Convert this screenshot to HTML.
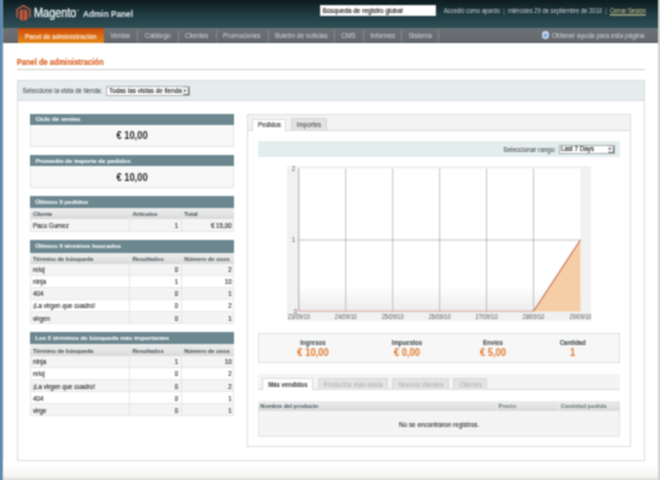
<!DOCTYPE html>
<html><head><meta charset="utf-8">
<style>
*{margin:0;padding:0;box-sizing:border-box}
html,body{width:660px;height:480px;overflow:hidden;background:#fff}
body{position:relative;font-family:"Liberation Sans",sans-serif;color:#222}
#w{position:absolute;left:0;top:0;width:660px;height:480px;background:#fff;overflow:hidden;filter:url(#bl)}
.a{position:absolute}
.t{position:absolute;white-space:nowrap;line-height:1;transform-origin:0 50%}
</style></head><body>
<svg width="0" height="0" style="position:absolute"><filter id="bl" x="0" y="0" width="100%" height="100%" color-interpolation-filters="sRGB"><feConvolveMatrix order="3" kernelMatrix="1 2 1 2 4 2 1 2 1" divisor="16" edgeMode="duplicate"/></filter></svg>
<div id="w">
<div class="a" style="left:0;top:0;width:4px;height:480px;background:linear-gradient(90deg,#5d8db8 0,#5d8db8 1px,#5480aa 1px,#5480aa 2px,#8c9cb2 2px,#8c9cb2 3px,#eaf0fa 3px)"></div>
<div class="a" style="left:658px;top:0;width:2px;height:480px;background:#d6d3d0"></div>
<div class="a" style="left:3px;top:0;width:655px;height:28px;background:linear-gradient(#0c1b1f,#1f3a41 50%,#2f4f57)"></div>
<svg class="a" style="left:0;top:0" width="40" height="26" viewBox="0 0 40 26">
 <path d="M17.1 17.4 V9.4 L23.5 5.7 L29.9 9.4 V17.4" fill="none" stroke="#c0624a" stroke-width="1.5"/>
 <polygon points="19.5,10.7 23.1,8.7 23.1,21 19.5,19.2" fill="#c4573b"/>
 <polygon points="23.9,8.7 27.5,10.7 27.5,19.2 23.9,21" fill="#c4573b"/>
</svg>
<div class="t" style="left:34.00px;top:7px;font-size:10.9px;font-weight:normal;color:#e9eef0;transform:scaleY(1.15);-webkit-text-stroke:0.3px #e9eef0">Magento<span style="font-size:3px;position:relative;top:-4.5px;margin-left:0.2px;-webkit-text-stroke:0">™</span></div>
<div class="t" style="left:83.00px;top:11px;font-size:8.26px;font-weight:bold;color:#e3e9ec;transform:scaleY(1.05);">Admin Panel</div>
<div class="a" style="left:320.3px;top:5px;width:115.3px;height:10.5px;background:#fff;border:1px solid #dfe5e7"></div>
<div class="t" style="left:322.50px;top:8px;font-size:6.45px;font-weight:normal;color:#1a1612;transform:scaleY(1.15);-webkit-text-stroke:0.15px #1a1612">Búsqueda de registro global</div>
<div class="t" style="left:443.70px;top:9px;font-size:5.82px;font-weight:normal;color:#cdd5d8;transform:scaleY(1.15);">Accedió como apardo &nbsp;<span style="color:#8fa0a5">|</span>&nbsp; miércoles 29 de septiembre de 2010 &nbsp;<span style="color:#8fa0a5">|</span>&nbsp; <span style="color:#ddd394;text-decoration:underline;text-decoration-thickness:0.5px;text-underline-offset:1px">Cerrar Sesión</span></div>
<div class="a" style="left:3px;top:28px;width:655px;height:14.5px;background:linear-gradient(#6d7276,#65696d 88%,#505458)"></div>
<div class="a" style="left:18px;top:28px;width:85.5px;height:14.5px;background:linear-gradient(#9c4a1e 0,#cf510e 10%,#d9620f 40%,#e3891c 100%)"></div>
<div class="t" style="left:25.00px;top:34px;font-size:6.22px;font-weight:bold;color:#fbe6d2;transform:scaleY(1.05);">Panel de administración</div>
<div class="t" style="left:110.30px;top:33px;font-size:6.45px;font-weight:normal;color:#d3d8db;transform:scaleY(1.05);">Ventas</div>
<div class="a" style="left:136.5px;top:28px;width:1px;height:15px;background:linear-gradient(#6e7377,#8e9397 50%,#6a6f73)"></div>
<div class="t" style="left:144.80px;top:33px;font-size:6.45px;font-weight:normal;color:#d3d8db;transform:scaleY(1.05);">Catálogo</div>
<div class="a" style="left:178px;top:28px;width:1px;height:15px;background:linear-gradient(#6e7377,#8e9397 50%,#6a6f73)"></div>
<div class="t" style="left:185.00px;top:33px;font-size:6.45px;font-weight:normal;color:#d3d8db;transform:scaleY(1.05);">Clientes</div>
<div class="a" style="left:215.5px;top:28px;width:1px;height:15px;background:linear-gradient(#6e7377,#8e9397 50%,#6a6f73)"></div>
<div class="t" style="left:223.00px;top:33px;font-size:6.45px;font-weight:normal;color:#d3d8db;transform:scaleY(1.05);">Promociones</div>
<div class="a" style="left:267.5px;top:28px;width:1px;height:15px;background:linear-gradient(#6e7377,#8e9397 50%,#6a6f73)"></div>
<div class="t" style="left:275.00px;top:33px;font-size:6.45px;font-weight:normal;color:#d3d8db;transform:scaleY(1.05);">Boletín de noticias</div>
<div class="a" style="left:333.5px;top:28px;width:1px;height:15px;background:linear-gradient(#6e7377,#8e9397 50%,#6a6f73)"></div>
<div class="t" style="left:341.30px;top:33px;font-size:6.45px;font-weight:normal;color:#d3d8db;transform:scaleY(1.05);">CMS</div>
<div class="a" style="left:362.5px;top:28px;width:1px;height:15px;background:linear-gradient(#6e7377,#8e9397 50%,#6a6f73)"></div>
<div class="t" style="left:370.30px;top:33px;font-size:6.45px;font-weight:normal;color:#d3d8db;transform:scaleY(1.05);">Informes</div>
<div class="a" style="left:400.8px;top:28px;width:1px;height:15px;background:linear-gradient(#6e7377,#8e9397 50%,#6a6f73)"></div>
<div class="t" style="left:408.70px;top:33px;font-size:6.45px;font-weight:normal;color:#d3d8db;transform:scaleY(1.05);">Sistema</div>
<div class="a" style="left:438.3px;top:28px;width:1px;height:15px;background:linear-gradient(#6e7377,#8e9397 50%,#6a6f73)"></div>
<div class="a" style="left:541.9px;top:31.2px;width:7.6px;height:7.6px;border-radius:50%;background:radial-gradient(circle at 50% 55%,#6d9acb 0,#8fb4da 30%,#d2e5f6 55%,#b4cfea 100%)"></div>
<div class="t" style="left:552.00px;top:33px;font-size:6.45px;font-weight:normal;color:#d3d8db;transform:scaleY(1.05);">Obtener ayuda para esta página</div>
<div class="t" style="left:16.70px;top:59px;font-size:7.56px;font-weight:bold;color:#d9672a;transform:scaleY(1.15);-webkit-text-stroke:0.2px #d9672a">Panel de administración</div>
<div class="a" style="left:16.5px;top:69px;width:628.5px;height:1px;background:#c9c9c9"></div>
<div class="a" style="left:16.5px;top:80px;width:628.5px;height:381px;border:1px solid #dcdcdc"></div>
<div class="a" style="left:16.5px;top:79.5px;width:628.5px;height:21px;background:#e5eced;border:1px solid #d6dcdd"></div>
<div class="t" style="left:22.50px;top:88px;font-size:6.16px;font-weight:normal;color:#333;transform:scaleY(1.15);">Seleccione la vista de tienda:</div>
<div class="a" style="left:106px;top:85.8px;width:83.6px;height:10.2px;background:#fff;border:1px solid #a9aeb0"></div>
<div class="t" style="left:109.00px;top:88px;font-size:6.36px;font-weight:normal;color:#111;transform:scaleY(1.15);-webkit-text-stroke:0.1px #111">Todas las vistas de tienda</div>
<div class="a" style="left:182.6px;top:86.8px;width:6.3px;height:8.3px;background:#f2f2f2;border-style:solid;border-width:0.6px 1px 1px 0.6px;border-color:#d8d8d8 #6f6f6f #6f6f6f #d8d8d8"></div>
<div class="a" style="left:184.2px;top:89.9px;width:0;height:0;border-left:1.7px solid transparent;border-right:1.7px solid transparent;border-top:2.2px solid #111"></div>
<div class="a" style="left:30px;top:113.8px;width:204px;height:33px;background:#f8f8f8;border:1px solid #e4e4e4"></div>
<div class="a" style="left:30px;top:113.8px;width:204px;height:11px;background:#6c8790"></div>
<div class="t" style="left:35.40px;top:116px;font-size:6.13px;font-weight:bold;color:#f2f6f7;transform:none;-webkit-text-stroke:0.1px #f2f6f7">Ciclo de ventas</div>
<div class="t" style="left:102.00px;width:60px;text-align:center;top:132px;font-size:9.35px;font-weight:bold;color:#2a2a2a;transform:scaleY(1.15);">€ 10,00</div>
<div class="a" style="left:30px;top:155.3px;width:204px;height:33px;background:#f8f8f8;border:1px solid #e4e4e4"></div>
<div class="a" style="left:30px;top:155.3px;width:204px;height:11px;background:#6c8790"></div>
<div class="t" style="left:35.40px;top:158px;font-size:6.13px;font-weight:bold;color:#f2f6f7;transform:none;-webkit-text-stroke:0.1px #f2f6f7">Promedio de importe de pedidos</div>
<div class="t" style="left:102.00px;width:60px;text-align:center;top:174px;font-size:9.35px;font-weight:bold;color:#2a2a2a;transform:scaleY(1.15);">€ 10,00</div>
<div class="a" style="left:30px;top:196.2px;width:204px;height:35.5px;background:#fff;border:1px solid #e2e2e2"></div>
<div class="a" style="left:30px;top:196.2px;width:204px;height:11.6px;background:#6c8790"></div>
<div class="t" style="left:35.20px;top:199px;font-size:6.15px;font-weight:bold;color:#f2f6f7;transform:none;-webkit-text-stroke:0.1px #f2f6f7">Últimos 5 pedidos</div>
<div class="a" style="left:30px;top:207.80px;width:204px;height:10.9px;background:linear-gradient(#ececec,#e6e6e6 45%,#d9d9d9)"></div>
<div class="t" style="left:33.00px;top:212px;font-size:5.8px;font-weight:bold;color:#535d61;transform:scaleY(1.05);-webkit-text-stroke:0.08px #535d61">Cliente</div>
<div class="t" style="left:132.40px;top:212px;font-size:5.8px;font-weight:bold;color:#535d61;transform:scaleY(1.05);-webkit-text-stroke:0.08px #535d61">Artículos</div>
<div class="t" style="left:184.30px;top:212px;font-size:5.8px;font-weight:bold;color:#535d61;transform:scaleY(1.05);-webkit-text-stroke:0.08px #535d61">Total</div>
<div class="a" style="left:30px;top:218.70px;width:204px;height:13px;background:#f4f4f4;border:1px solid #e6e6e6;border-top:0"></div>
<div class="t" style="left:33.00px;top:223px;font-size:6.2px;font-weight:normal;color:#1e1e1e;transform:scaleY(1.15);-webkit-text-stroke:0.1px #1e1e1e">Paco Gomez</div>
<div class="t" style="right:481.80px;top:223px;font-size:6.2px;font-weight:normal;color:#1e1e1e;transform:scaleY(1.15);-webkit-text-stroke:0.1px #1e1e1e">1</div>
<div class="t" style="right:428.40px;top:223px;font-size:6.2px;font-weight:normal;color:#1e1e1e;transform:scaleY(1.15);-webkit-text-stroke:0.1px #1e1e1e">€ 15,00</div>
<div class="a" style="left:129px;top:207.80px;width:1px;height:23.90px;background:#e4e4e4"></div>
<div class="a" style="left:180.8px;top:207.80px;width:1px;height:23.90px;background:#e4e4e4"></div>
<div class="a" style="left:30px;top:240.3px;width:204px;height:84.0px;background:#fff;border:1px solid #e2e2e2"></div>
<div class="a" style="left:30px;top:240.3px;width:204px;height:12.3px;background:#6c8790"></div>
<div class="t" style="left:35.20px;top:243px;font-size:6.15px;font-weight:bold;color:#f2f6f7;transform:none;-webkit-text-stroke:0.1px #f2f6f7">Últimos 5 términos buscados</div>
<div class="a" style="left:30px;top:252.60px;width:204px;height:11.4px;background:linear-gradient(#ececec,#e6e6e6 45%,#d9d9d9)"></div>
<div class="t" style="left:33.00px;top:257px;font-size:5.8px;font-weight:bold;color:#535d61;transform:scaleY(1.05);-webkit-text-stroke:0.08px #535d61">Término de búsqueda</div>
<div class="t" style="left:132.40px;top:257px;font-size:5.8px;font-weight:bold;color:#535d61;transform:scaleY(1.05);-webkit-text-stroke:0.08px #535d61">Resultados</div>
<div class="t" style="left:184.30px;top:257px;font-size:5.8px;font-weight:bold;color:#535d61;transform:scaleY(1.05);-webkit-text-stroke:0.08px #535d61">Número de usos</div>
<div class="a" style="left:30px;top:264.00px;width:204px;height:12.05px;background:#f4f4f4;border:1px solid #e6e6e6;border-top:0"></div>
<div class="t" style="left:33.00px;top:267px;font-size:6.2px;font-weight:normal;color:#1e1e1e;transform:scaleY(1.15);-webkit-text-stroke:0.1px #1e1e1e">reloj</div>
<div class="t" style="right:481.80px;top:267px;font-size:6.2px;font-weight:normal;color:#1e1e1e;transform:scaleY(1.15);-webkit-text-stroke:0.1px #1e1e1e">0</div>
<div class="t" style="right:428.40px;top:267px;font-size:6.2px;font-weight:normal;color:#1e1e1e;transform:scaleY(1.15);-webkit-text-stroke:0.1px #1e1e1e">2</div>
<div class="a" style="left:30px;top:276.05px;width:204px;height:12.05px;background:#fff;border:1px solid #e6e6e6;border-top:0"></div>
<div class="t" style="left:33.00px;top:279px;font-size:6.2px;font-weight:normal;color:#1e1e1e;transform:scaleY(1.15);-webkit-text-stroke:0.1px #1e1e1e">ninja</div>
<div class="t" style="right:481.80px;top:279px;font-size:6.2px;font-weight:normal;color:#1e1e1e;transform:scaleY(1.15);-webkit-text-stroke:0.1px #1e1e1e">1</div>
<div class="t" style="right:428.40px;top:279px;font-size:6.2px;font-weight:normal;color:#1e1e1e;transform:scaleY(1.15);-webkit-text-stroke:0.1px #1e1e1e">10</div>
<div class="a" style="left:30px;top:288.10px;width:204px;height:12.05px;background:#f4f4f4;border:1px solid #e6e6e6;border-top:0"></div>
<div class="t" style="left:33.00px;top:291px;font-size:6.2px;font-weight:normal;color:#1e1e1e;transform:scaleY(1.15);-webkit-text-stroke:0.1px #1e1e1e">404</div>
<div class="t" style="right:481.80px;top:291px;font-size:6.2px;font-weight:normal;color:#1e1e1e;transform:scaleY(1.15);-webkit-text-stroke:0.1px #1e1e1e">0</div>
<div class="t" style="right:428.40px;top:291px;font-size:6.2px;font-weight:normal;color:#1e1e1e;transform:scaleY(1.15);-webkit-text-stroke:0.1px #1e1e1e">1</div>
<div class="a" style="left:30px;top:300.15px;width:204px;height:12.05px;background:#fff;border:1px solid #e6e6e6;border-top:0"></div>
<div class="t" style="left:33.00px;top:303px;font-size:6.2px;font-weight:normal;color:#1e1e1e;transform:scaleY(1.15);-webkit-text-stroke:0.1px #1e1e1e">¡La virgen que cuadro!</div>
<div class="t" style="right:481.80px;top:303px;font-size:6.2px;font-weight:normal;color:#1e1e1e;transform:scaleY(1.15);-webkit-text-stroke:0.1px #1e1e1e">0</div>
<div class="t" style="right:428.40px;top:303px;font-size:6.2px;font-weight:normal;color:#1e1e1e;transform:scaleY(1.15);-webkit-text-stroke:0.1px #1e1e1e">2</div>
<div class="a" style="left:30px;top:312.20px;width:204px;height:12.05px;background:#f4f4f4;border:1px solid #e6e6e6;border-top:0"></div>
<div class="t" style="left:33.00px;top:316px;font-size:6.2px;font-weight:normal;color:#1e1e1e;transform:scaleY(1.15);-webkit-text-stroke:0.1px #1e1e1e">virgen</div>
<div class="t" style="right:481.80px;top:316px;font-size:6.2px;font-weight:normal;color:#1e1e1e;transform:scaleY(1.15);-webkit-text-stroke:0.1px #1e1e1e">0</div>
<div class="t" style="right:428.40px;top:316px;font-size:6.2px;font-weight:normal;color:#1e1e1e;transform:scaleY(1.15);-webkit-text-stroke:0.1px #1e1e1e">1</div>
<div class="a" style="left:129px;top:252.60px;width:1px;height:71.65px;background:#e4e4e4"></div>
<div class="a" style="left:180.8px;top:252.60px;width:1px;height:71.65px;background:#e4e4e4"></div>
<div class="a" style="left:30px;top:332.3px;width:204px;height:83.8px;background:#fff;border:1px solid #e2e2e2"></div>
<div class="a" style="left:30px;top:332.3px;width:204px;height:12.1px;background:#6c8790"></div>
<div class="t" style="left:35.20px;top:335px;font-size:6.15px;font-weight:bold;color:#f2f6f7;transform:none;-webkit-text-stroke:0.1px #f2f6f7">Los 5 términos de búsqueda más importantes</div>
<div class="a" style="left:30px;top:344.40px;width:204px;height:11.4px;background:linear-gradient(#ececec,#e6e6e6 45%,#d9d9d9)"></div>
<div class="t" style="left:33.00px;top:349px;font-size:5.8px;font-weight:bold;color:#535d61;transform:scaleY(1.05);-webkit-text-stroke:0.08px #535d61">Término de búsqueda</div>
<div class="t" style="left:132.40px;top:349px;font-size:5.8px;font-weight:bold;color:#535d61;transform:scaleY(1.05);-webkit-text-stroke:0.08px #535d61">Resultados</div>
<div class="t" style="left:184.30px;top:349px;font-size:5.8px;font-weight:bold;color:#535d61;transform:scaleY(1.05);-webkit-text-stroke:0.08px #535d61">Número de usos</div>
<div class="a" style="left:30px;top:355.80px;width:204px;height:12.05px;background:#f4f4f4;border:1px solid #e6e6e6;border-top:0"></div>
<div class="t" style="left:33.00px;top:359px;font-size:6.2px;font-weight:normal;color:#1e1e1e;transform:scaleY(1.15);-webkit-text-stroke:0.1px #1e1e1e">ninja</div>
<div class="t" style="right:481.80px;top:359px;font-size:6.2px;font-weight:normal;color:#1e1e1e;transform:scaleY(1.15);-webkit-text-stroke:0.1px #1e1e1e">1</div>
<div class="t" style="right:428.40px;top:359px;font-size:6.2px;font-weight:normal;color:#1e1e1e;transform:scaleY(1.15);-webkit-text-stroke:0.1px #1e1e1e">10</div>
<div class="a" style="left:30px;top:367.85px;width:204px;height:12.05px;background:#fff;border:1px solid #e6e6e6;border-top:0"></div>
<div class="t" style="left:33.00px;top:371px;font-size:6.2px;font-weight:normal;color:#1e1e1e;transform:scaleY(1.15);-webkit-text-stroke:0.1px #1e1e1e">reloj</div>
<div class="t" style="right:481.80px;top:371px;font-size:6.2px;font-weight:normal;color:#1e1e1e;transform:scaleY(1.15);-webkit-text-stroke:0.1px #1e1e1e">0</div>
<div class="t" style="right:428.40px;top:371px;font-size:6.2px;font-weight:normal;color:#1e1e1e;transform:scaleY(1.15);-webkit-text-stroke:0.1px #1e1e1e">2</div>
<div class="a" style="left:30px;top:379.90px;width:204px;height:12.05px;background:#f4f4f4;border:1px solid #e6e6e6;border-top:0"></div>
<div class="t" style="left:33.00px;top:384px;font-size:6.2px;font-weight:normal;color:#1e1e1e;transform:scaleY(1.15);-webkit-text-stroke:0.1px #1e1e1e">¡La virgen que cuadro!</div>
<div class="t" style="right:481.80px;top:384px;font-size:6.2px;font-weight:normal;color:#1e1e1e;transform:scaleY(1.15);-webkit-text-stroke:0.1px #1e1e1e">0</div>
<div class="t" style="right:428.40px;top:384px;font-size:6.2px;font-weight:normal;color:#1e1e1e;transform:scaleY(1.15);-webkit-text-stroke:0.1px #1e1e1e">2</div>
<div class="a" style="left:30px;top:391.95px;width:204px;height:12.05px;background:#fff;border:1px solid #e6e6e6;border-top:0"></div>
<div class="t" style="left:33.00px;top:396px;font-size:6.2px;font-weight:normal;color:#1e1e1e;transform:scaleY(1.15);-webkit-text-stroke:0.1px #1e1e1e">404</div>
<div class="t" style="right:481.80px;top:396px;font-size:6.2px;font-weight:normal;color:#1e1e1e;transform:scaleY(1.15);-webkit-text-stroke:0.1px #1e1e1e">0</div>
<div class="t" style="right:428.40px;top:396px;font-size:6.2px;font-weight:normal;color:#1e1e1e;transform:scaleY(1.15);-webkit-text-stroke:0.1px #1e1e1e">1</div>
<div class="a" style="left:30px;top:404.00px;width:204px;height:12.05px;background:#f4f4f4;border:1px solid #e6e6e6;border-top:0"></div>
<div class="t" style="left:33.00px;top:408px;font-size:6.2px;font-weight:normal;color:#1e1e1e;transform:scaleY(1.15);-webkit-text-stroke:0.1px #1e1e1e">virge</div>
<div class="t" style="right:481.80px;top:408px;font-size:6.2px;font-weight:normal;color:#1e1e1e;transform:scaleY(1.15);-webkit-text-stroke:0.1px #1e1e1e">0</div>
<div class="t" style="right:428.40px;top:408px;font-size:6.2px;font-weight:normal;color:#1e1e1e;transform:scaleY(1.15);-webkit-text-stroke:0.1px #1e1e1e">1</div>
<div class="a" style="left:129px;top:344.40px;width:1px;height:71.65px;background:#e4e4e4"></div>
<div class="a" style="left:180.8px;top:344.40px;width:1px;height:71.65px;background:#e4e4e4"></div>
<div class="a" style="left:246.8px;top:114px;width:384.5px;height:333px;border:1px solid #dcdcdc;background:#fff"></div>
<div class="a" style="left:247.8px;top:115px;width:382.5px;height:15.5px;background:#f3f3f3;border-bottom:1px solid #d9d9d9"></div>
<div class="a" style="left:252px;top:119px;width:34.2px;height:12px;background:#fff;border:1px solid #d9d9d9;border-bottom:0"></div>
<div class="t" style="left:257.90px;top:122px;font-size:6.39px;font-weight:normal;color:#222;transform:scaleY(1.15);-webkit-text-stroke:0.08px #222">Pedidos</div>
<div class="a" style="left:290.8px;top:118.3px;width:36.2px;height:12.2px;background:#e2e2e2;border:1px solid #d6d6d6;border-bottom:0"></div>
<div class="t" style="left:296.80px;top:122px;font-size:6.22px;font-weight:normal;color:#333;transform:scaleY(1.15);">Importes</div>
<div class="a" style="left:257.9px;top:140.8px;width:362.3px;height:15.8px;background:#e3eded"></div>
<div class="t" style="left:503.30px;top:147px;font-size:6.32px;font-weight:normal;color:#333;transform:scaleY(1.15);">Seleccionar rango:</div>
<div class="a" style="left:558.5px;top:144.6px;width:56.3px;height:9px;background:#fff;border:1px solid #a4a9ab"></div>
<div class="t" style="left:561.00px;top:146px;font-size:6.25px;font-weight:normal;color:#111;transform:scaleY(1.15);-webkit-text-stroke:0.12px #111">Last 7 Days</div>
<div class="a" style="left:607.6px;top:145.5px;width:6.6px;height:7.4px;background:#f2f2f2;border-style:solid;border-width:0.6px 1px 1px 0.6px;border-color:#d8d8d8 #6f6f6f #6f6f6f #d8d8d8"></div>
<div class="a" style="left:609.2px;top:148.2px;width:0;height:0;border-left:1.7px solid transparent;border-right:1.7px solid transparent;border-top:2.2px solid #111"></div>
<div class="a" style="left:286.7px;top:166px;width:304px;height:155.4px;background:#f1f1f1"></div>
<svg class="a" style="left:0;top:0" width="660" height="480">
 <defs><linearGradient id="pg" x1="0" y1="0" x2="0" y2="1"><stop offset="0" stop-color="#fff"/><stop offset="0.82" stop-color="#fff"/><stop offset="1" stop-color="#ececec"/></linearGradient></defs>
 <rect x="298.8" y="168.5" width="281.6" height="143" fill="url(#pg)"/>
 <g stroke="#a9a9a9" stroke-width="0.75"><line x1="345.74" y1="168.5" x2="345.74" y2="311.5"/><line x1="392.68" y1="168.5" x2="392.68" y2="311.5"/><line x1="439.62" y1="168.5" x2="439.62" y2="311.5"/><line x1="486.56" y1="168.5" x2="486.56" y2="311.5"/><line x1="533.50" y1="168.5" x2="533.50" y2="311.5"/>
  <line x1="298.8" y1="240" x2="580.4" y2="240"/>
 </g>
 <line x1="298.8" y1="168.5" x2="298.8" y2="311.5" stroke="#a5a5a5" stroke-width="1"/>
 <polygon points="533.5,311.5 580.4,240 580.4,311.5" fill="#f5cda6"/>
 <line x1="298.8" y1="311.2" x2="533.5" y2="311.2" stroke="#d49a80" stroke-width="0.9"/>
 <line x1="533.5" y1="311.2" x2="580.4" y2="240" stroke="#c46a45" stroke-width="1.1"/>
</svg>
<div class="t" style="right:364.80px;top:167px;font-size:5.6px;font-weight:normal;color:#555;transform:scaleY(1.15);">2</div>
<div class="t" style="right:364.80px;top:238px;font-size:5.6px;font-weight:normal;color:#555;transform:scaleY(1.15);">1</div>
<div class="t" style="right:362.80px;top:310px;font-size:5.6px;font-weight:normal;color:#555;transform:scaleY(1.15);">0</div>
<div class="t" style="left:283.80px;width:30px;text-align:center;top:315px;font-size:5.65px;font-weight:normal;color:#5a5a5a;transform:scaleY(1.15);">23/09/10</div>
<div class="t" style="left:330.74px;width:30px;text-align:center;top:315px;font-size:5.65px;font-weight:normal;color:#5a5a5a;transform:scaleY(1.15);">24/09/10</div>
<div class="t" style="left:377.68px;width:30px;text-align:center;top:315px;font-size:5.65px;font-weight:normal;color:#5a5a5a;transform:scaleY(1.15);">25/09/10</div>
<div class="t" style="left:424.62px;width:30px;text-align:center;top:315px;font-size:5.65px;font-weight:normal;color:#5a5a5a;transform:scaleY(1.15);">26/09/10</div>
<div class="t" style="left:471.56px;width:30px;text-align:center;top:315px;font-size:5.65px;font-weight:normal;color:#5a5a5a;transform:scaleY(1.15);">27/09/10</div>
<div class="t" style="left:518.50px;width:30px;text-align:center;top:315px;font-size:5.65px;font-weight:normal;color:#5a5a5a;transform:scaleY(1.15);">28/09/10</div>
<div class="t" style="left:565.44px;width:30px;text-align:center;top:315px;font-size:5.65px;font-weight:normal;color:#5a5a5a;transform:scaleY(1.15);">29/09/10</div>
<div class="a" style="left:257.9px;top:332.6px;width:362px;height:30.6px;background:#f7f7f7;border:1px solid #dedede"></div>
<div class="t" style="left:283.00px;width:60px;text-align:center;top:340px;font-size:6.1px;font-weight:bold;color:#3a4245;transform:scaleY(1.15);">Ingresos</div>
<div class="t" style="left:283.00px;width:60px;text-align:center;top:348px;font-size:9.4px;font-weight:bold;color:#e27a2c;transform:scaleY(1.15);">€ 10,00</div>
<div class="t" style="left:377.00px;width:60px;text-align:center;top:340px;font-size:6.1px;font-weight:bold;color:#3a4245;transform:scaleY(1.15);">Impuestos</div>
<div class="t" style="left:377.00px;width:60px;text-align:center;top:348px;font-size:9.4px;font-weight:bold;color:#e27a2c;transform:scaleY(1.15);">€ 0,00</div>
<div class="t" style="left:463.00px;width:60px;text-align:center;top:340px;font-size:6.1px;font-weight:bold;color:#3a4245;transform:scaleY(1.15);">Envíos</div>
<div class="t" style="left:463.00px;width:60px;text-align:center;top:348px;font-size:9.4px;font-weight:bold;color:#e27a2c;transform:scaleY(1.15);">€ 5,00</div>
<div class="t" style="left:542.70px;width:60px;text-align:center;top:340px;font-size:6.1px;font-weight:bold;color:#3a4245;transform:scaleY(1.15);">Cantidad</div>
<div class="t" style="left:542.70px;width:60px;text-align:center;top:348px;font-size:9.4px;font-weight:bold;color:#e27a2c;transform:scaleY(1.15);">1</div>
<div class="a" style="left:257.9px;top:374px;width:362.3px;height:16px;background:#f4f4f4;border-bottom:1px solid #d9d9d9"></div>
<div class="a" style="left:262px;top:378.2px;width:51px;height:12.3px;background:#fff;border:1px solid #d9d9d9;border-bottom:0"></div>
<div class="t" style="left:268.20px;top:383px;font-size:5.96px;font-weight:bold;color:#333;transform:scaleY(1.15);">Más vendidos</div>
<div class="a" style="left:317.6px;top:378.2px;width:70.9px;height:12.3px;background:#e3e3e3;border:1px solid #d9d9d9;border-bottom:0"></div>
<div class="t" style="left:323.60px;top:382px;font-size:6.26px;font-weight:normal;color:#adadad;transform:scaleY(1.15);">Productos más vistos</div>
<div class="a" style="left:392.4px;top:378.2px;width:56.6px;height:12.3px;background:#e3e3e3;border:1px solid #d9d9d9;border-bottom:0"></div>
<div class="t" style="left:398.60px;top:382px;font-size:6.37px;font-weight:normal;color:#adadad;transform:scaleY(1.15);">Nuevos clientes</div>
<div class="a" style="left:453.2px;top:378.2px;width:34.1px;height:12.3px;background:#e3e3e3;border:1px solid #d9d9d9;border-bottom:0"></div>
<div class="t" style="left:459.40px;top:382px;font-size:6.2px;font-weight:normal;color:#adadad;transform:scaleY(1.15);">Clientes</div>
<div class="a" style="left:257.8px;top:400.8px;width:362.7px;height:36.4px;background:#f4f4f4;border:1px solid #e2e2e2"></div>
<div class="a" style="left:257.8px;top:400.8px;width:362.7px;height:10.2px;background:linear-gradient(#ececec,#e4e4e4 45%,#d9d9d9)"></div>
<div class="a" style="left:495.5px;top:400.8px;width:1px;height:10.2px;background:#eaeaea"></div>
<div class="a" style="left:558px;top:400.8px;width:1px;height:10.2px;background:#eaeaea"></div>
<div class="t" style="left:260.30px;top:404px;font-size:5.78px;font-weight:bold;color:#4a585e;transform:none;">Nombre del producto</div>
<div class="t" style="left:498.60px;top:404px;font-size:5.78px;font-weight:bold;color:#6c777b;transform:none;">Precio</div>
<div class="t" style="left:561.00px;top:404px;font-size:5.85px;font-weight:bold;color:#6c777b;transform:none;">Cantidad pedida</div>
<div class="t" style="left:399.00px;top:422px;font-size:6.36px;font-weight:normal;color:#222;transform:scaleY(1.15);-webkit-text-stroke:0.06px #222">No se encontraron registros.</div>
<div class="a" style="left:3px;top:461px;width:655px;height:19px;background:linear-gradient(#fff 0,#fff 20%,#f3f3f1 85%,#e4e2de 92%,#e4e2de)"></div>
</div>
</body></html>
